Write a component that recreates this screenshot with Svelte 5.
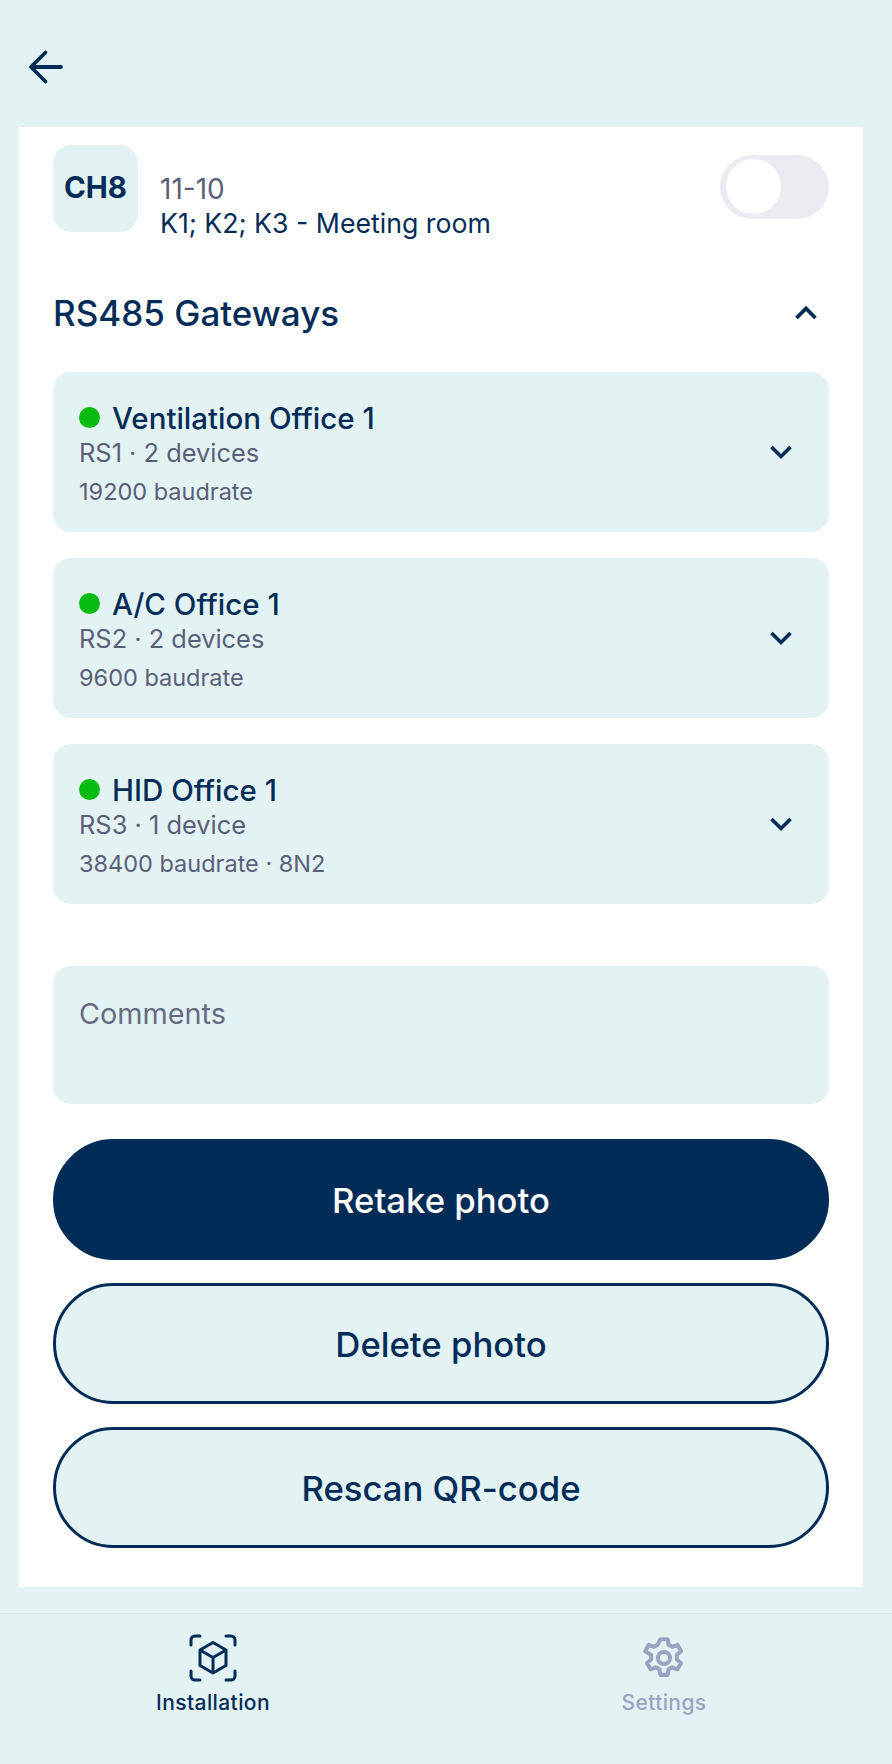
<script lang="ts">
    const gateways = [
        { name: 'Ventilation Office 1', sub: 'RS1 · 2 devices', info: '19200 baudrate' },
        { name: 'A/C Office 1', sub: 'RS2 · 2 devices', info: '9600 baudrate' },
        { name: 'HID Office 1', sub: 'RS3 · 1 device', info: '38400 baudrate · 8N2' }
    ];
</script>

<div class="page">
    <header class="top">
        <svg class="back" width="36" height="36" viewBox="0 0 36 36" fill="none">
            <path d="M3 18H33M17.500 3.500 3 18l14.500 14.500" stroke="#022c58" stroke-width="3.800" stroke-linecap="round" stroke-linejoin="round"/>
        </svg>
    </header>

    <main class="sheet">
        <section class="channel">
            <div class="badge">CH8</div>
            <div class="channel-text">
                <span class="range">11-10</span>
                <span class="place">K1; K2; K3 - Meeting room</span>
            </div>
            <div class="toggle"><span class="knob"></span></div>
        </section>

        <div class="section-head">
            <h2>RS485 Gateways</h2>
            <svg class="chev-up" width="24" height="16" viewBox="0 0 24 16" fill="none">
                <path d="M2.500 13 12 3.500 21.500 13" stroke="#022c58" stroke-width="3.800" stroke-linejoin="miter"/>
            </svg>
        </div>

        <div class="cards">
            {#each gateways as g}
                <div class="card">
                    <div class="card-body">
                        <div class="card-title"><span class="dot"></span>{g.name}</div>
                        <div class="card-sub">{g.sub}</div>
                        <div class="card-info">{g.info}</div>
                    </div>
                    <svg class="chev" width="24" height="16" viewBox="0 0 24 16" fill="none">
                        <path d="M2.500 3 12 12.500 21.500 3" stroke="#022c58" stroke-width="3.600"/>
                    </svg>
                </div>
            {/each}
        </div>

        <div class="comments">Comments</div>

        <div class="buttons">
            <button class="btn primary">Retake photo</button>
            <button class="btn">Delete photo</button>
            <button class="btn">Rescan QR-code</button>
        </div>
    </main>

    <nav class="tabs">
        <div class="tab active">
            <svg width="48" height="48" viewBox="0 0 48 48" fill="none" stroke="#022c58" stroke-width="3" stroke-linejoin="round">
                <path d="M2 11V6a4 4 0 0 1 4-4h5M37 2h5a4 4 0 0 1 4 4v5M46 37v5a4 4 0 0 1-4 4h-5M11 46H6a4 4 0 0 1-4-4v-5" stroke-linecap="round"/>
                <path d="M24 8.500 37 16v15.500L24 39 11 31.500V16Z"/>
                <path d="M11 16l13 7.500L37 16M24 23.500V39"/>
            </svg>
            <span>Installation</span>
        </div>
        <div class="tab">
            <svg width="44" height="46" viewBox="0 0 24 24" fill="none" stroke="#9aa3c2" stroke-width="2.200" stroke-linejoin="round">
                <path d="M10 1.800h4l.5 3 2 1.100 2.800-1.100 2 3.500-2.300 1.900v2.600l2.300 1.900-2 3.500-2.800-1.100-2 1.100-.5 3h-4l-.5-3-2-1.100-2.800 1.100-2-3.500 2.300-1.900v-2.600L1.700 8.300l2-3.500 2.800 1.100 2-1.100Z"/>
                <circle cx="12" cy="12" r="3.300"/>
            </svg>
            <span>Settings</span>
        </div>
    </nav>
</div>

<style>
    :global(body) {
        margin: 0;
        background: #e3f2f3;
    }
    .page {
        width: 892px;
        height: 1764px;
        display: flex;
        flex-direction: column;
        background: #e3f2f3;
        font-family: Inter, "Liberation Sans", sans-serif;
        color: #022c58;
        overflow: hidden;
    }
    .top {
        height: 127px;
        flex: none;
        display: flex;
        align-items: flex-start;
        padding: 49px 0 0 28px;
        box-sizing: border-box;
    }
    .sheet {
        margin: 0 29px 0 19px;
        height: 1460px;
        flex: none;
        background: #fff;
        padding: 18px 34px 0;
        box-sizing: border-box;
    }
    .channel {
        display: flex;
        align-items: flex-start;
        height: 87px;
    }
    .badge {
        width: 85px;
        height: 87px;
        flex: none;
        border-radius: 18px;
        background: #e3f2f3;
        display: flex;
        align-items: center;
        justify-content: center;
        padding-bottom: 3px;
        box-sizing: border-box;
        font-size: 29.500px;
        font-weight: 700;
    }
    .channel-text {
        display: flex;
        flex-direction: column;
        margin-left: 22px;
        padding-top: 28px;
        flex: 1;
    }
    .range {
        font-size: 28px;
        line-height: 32px;
        color: #5a6079;
    }
    .place {
        font-size: 26.700px;
        line-height: 36px;
    }
    .toggle {
        width: 109px;
        height: 64px;
        margin-top: 10px;
        flex: none;
        border-radius: 32px;
        background: #ecebf2;
        padding: 4px 0 0 6px;
        box-sizing: border-box;
    }
    .knob {
        display: block;
        width: 55px;
        height: 55px;
        border-radius: 50%;
        background: #fff;
    }
    .section-head {
        display: flex;
        align-items: center;
        justify-content: space-between;
        margin-top: 60px;
        height: 44px;
        padding-right: 11px;
    }
    h2 {
        margin: 0 0 2px;
        font-size: 35px;
        font-weight: 500;
        line-height: 44px;
    }
    .chev-up {
        margin-top: -2px;
    }
    .cards {
        display: flex;
        flex-direction: column;
        gap: 26px;
        margin-top: 36px;
    }
    .card {
        height: 160px;
        background: #e3f2f3;
        border-radius: 18px;
        padding: 2px 36px 0 26px;
        box-sizing: border-box;
        display: flex;
        align-items: center;
        justify-content: space-between;
    }
    .chev {
        margin-top: -2px;
    }
    .card-title {
        display: flex;
        align-items: center;
        gap: 12px;
        font-size: 29.500px;
        font-weight: 500;
        line-height: 36px;
    }
    .dot {
        width: 21px;
        height: 21px;
        border-radius: 50%;
        background: #06bc10;
    }
    .card-sub {
        font-size: 25.400px;
        line-height: 32px;
        color: #5a6079;
        margin-top: 1px;
    }
    .card-info {
        font-size: 23.500px;
        line-height: 30px;
        color: #5a6079;
        margin-top: 8px;
    }
    .comments {
        margin-top: 62px;
        height: 138px;
        border-radius: 18px;
        background: #e3f2f3;
        padding: 30px 26px 0;
        box-sizing: border-box;
        font-size: 28.800px;
        line-height: 36px;
        color: #656b82;
    }
    .buttons {
        display: flex;
        flex-direction: column;
        gap: 23px;
        margin-top: 35px;
    }
    .btn {
        height: 121px;
        border-radius: 61px;
        border: 3px solid #022c58;
        background: #e3f2f3;
        color: #022c58;
        font-family: inherit;
        font-size: 34.700px;
        font-weight: 500;
        padding: 0;
    }
    .primary {
        background: #022c58;
        color: #fff;
    }
    .tabs {
        margin-top: 26px;
        flex: 1;
        border-top: 1px solid #d8e7e9;
        display: flex;
        gap: 311px;
        align-items: flex-start;
        padding: 20px 0 0 143px;
    }
    .tab {
        width: 140px;
        display: flex;
        flex-direction: column;
        align-items: center;
        color: #9aa3c2;
        font-size: 21px;
        font-weight: 500;
        letter-spacing: 0.4px;
    }
    .tab svg {
        height: 48px;
    }
    .tab span {
        margin-top: 8px;
        line-height: 26px;
    }
    .active {
        color: #022c58;
    }
</style>
